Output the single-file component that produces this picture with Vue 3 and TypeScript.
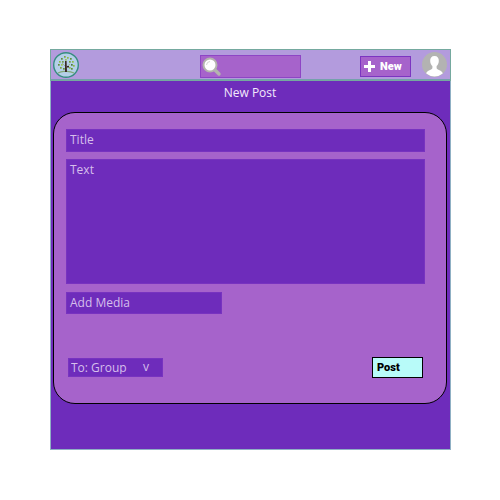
<script setup lang="ts">
import { ref } from 'vue'

const search = ref('')
const title = ref('')
const text = ref('')
const target = ref('group')

interface Leaf {
  x: number
  y: number
  tone: string
}

const leaves: Leaf[] = [
  { x: 11, y: 4, tone: '#7da63f' }, { x: 14, y: 5, tone: '#8bbd45' },
  { x: 17, y: 6, tone: '#5f8f3c' }, { x: 8, y: 6, tone: '#5f8f3c' },
  { x: 6, y: 9, tone: '#8bbd45' }, { x: 9, y: 9, tone: '#759b4b' },
  { x: 19, y: 9, tone: '#8bbd45' }, { x: 16, y: 9, tone: '#74a23c' },
  { x: 5, y: 12, tone: '#5f8f3c' }, { x: 8, y: 12, tone: '#9ac356' },
  { x: 18, y: 12, tone: '#50783c' }, { x: 20, y: 13, tone: '#8bbd45' },
  { x: 7, y: 15, tone: '#7da63f' }, { x: 10, y: 16, tone: '#5f8f3c' },
  { x: 16, y: 15, tone: '#8bbd45' }, { x: 18, y: 16, tone: '#5f8f3c' },
  { x: 12, y: 7, tone: '#9ac356' },
]
</script>

<template>
  <div class="page">
    <div class="frame">
      <header class="bar">
        <a class="logo" href="#" aria-label="Home">
          <svg viewBox="0 0 26 26" width="26" height="26" aria-hidden="true">
            <circle cx="13" cy="13" r="12.300" fill="#b4cfe8" stroke="#368d80" stroke-width="1.400" />
            <path d="M5 21Q9 19 12 19.500Q17 19 21 21" fill="none" stroke="#82a875" stroke-width="1.200" />
            <path d="M13 15L9 11M13.500 15L17 12" fill="none" stroke="#8a9a72" stroke-width=".6" />
            <path d="M12 20V9H13.600L14 20ZM14 14H16V15.500H14Z" fill="#3c2925" />
            <rect v-for="(leaf, i) in leaves" :key="i" :x="leaf.x" :y="leaf.y" width="1.700" height="1.700" :fill="leaf.tone" />
          </svg>
        </a>
        <label class="search">
          <svg viewBox="0 0 20 20" width="20" height="20" aria-hidden="true">
            <path d="M12 12L17 17" stroke="#b4b4ae" stroke-width="3.400" stroke-linecap="round" />
            <circle cx="8" cy="8" r="6.500" fill="#fff" stroke="#b4b4ae" stroke-width="2" />
            <path d="M4.500 8Q4.800 4.700 8 4.500" fill="none" stroke="#d5d5d2" />
          </svg>
          <input v-model="search" type="search" aria-label="Search" />
        </label>
        <div class="actions">
          <button class="new" type="button">
            <svg viewBox="0 0 11 11" width="11" height="11" aria-hidden="true">
              <path d="M5.500 0V11M0 5.500H11" stroke="#fff" stroke-width="3" />
            </svg>
            New
          </button>
          <a class="avatar" href="#" aria-label="Profile">
            <svg viewBox="0 0 25 25" width="25" height="25" aria-hidden="true">
              <circle cx="12.500" cy="12.500" r="12.500" fill="#b3b3b2" />
              <path d="M12.500 4C9.500 4 8 6 8.200 9C8.300 11.500 9.200 13 10.400 14V16C10.200 18 5 18 4.200 21.500Q8 24.500 12.500 24.500Q17 24.500 20.800 21.500C20 18 14.800 18 14.600 16V14C15.800 13 16.700 11.500 16.800 9C17 6 15.500 4 12.500 4Z" fill="#fff" />
            </svg>
          </a>
        </div>
      </header>

      <main class="content">
        <h1>New Post</h1>
        <form class="card" @submit.prevent>
          <input v-model="title" class="field title" type="text" placeholder="Title" aria-label="Title" />
          <textarea v-model="text" class="field body" placeholder="Text" aria-label="Text"></textarea>
          <button class="field media" type="button">Add Media</button>
          <div class="footer">
            <label class="group">
              <select v-model="target" aria-label="Post to">
                <option value="group">To: Group</option>
              </select>
              <span class="arrow" aria-hidden="true">v</span>
            </label>
            <button class="post" type="submit">Post</button>
          </div>
        </form>
      </main>
    </div>
  </div>
</template>

<style>
body {
  margin: 0;
  background: #fff;
}
</style>

<style scoped>
* {
  box-sizing: border-box;
}

.page {
  padding: 50px 49px 50px 50px;
  font-family: "Open Sans", sans-serif;
  font-size: 12px;
}

input,
textarea,
select,
button {
  margin: 0;
  border-radius: 0;
  outline: 0;
  font: inherit;
}

.frame {
  border: 1px solid #8fb0c4;
  border-top: 0;
  background: #6e2cbb;
}

.bar {
  display: grid;
  grid-template-columns: 1fr 101px 1fr;
  align-items: center;
  height: 30px;
  padding: 0 3px 0 2px;
  border-bottom: 1px solid #75a0ac;
  background: #b39bdd;
  box-shadow: 0 0 0 1px #75a99f;
}

.logo,
.avatar,
svg {
  display: block;
}

.logo {
  width: 26px;
}

.search {
  display: flex;
  align-items: center;
  height: 23px;
  margin-top: 4px;
  padding-left: 1px;
  border: 1px solid #8e45c5;
  background: #a663cb;
}

.search svg {
  flex: none;
}

.search input {
  width: 100%;
  min-width: 0;
  padding: 0;
  border: 0;
  background: transparent;
  color: #fff;
}

.actions {
  display: flex;
  justify-content: flex-end;
  align-items: center;
  gap: 11px;
}

.new {
  display: flex;
  align-items: center;
  gap: 5px;
  width: 51px;
  height: 21px;
  margin-top: 4px;
  padding: 0 3px;
  border: 1px solid #7c35c1;
  background: #a663cb;
  color: #fff;
}

.new,
.post {
  font-family: Roboto, sans-serif;
  font-size: 11px;
  font-weight: 900;
}

h1 {
  margin: 0;
  padding-top: 3px;
  color: #f3e9fb;
  font-size: 12px;
  font-weight: 400;
  line-height: 20px;
  text-align: center;
}

.content {
  padding: 0 3px 45px 2px;
}

.card {
  display: flex;
  flex-direction: column;
  align-items: flex-start;
  margin-top: 9px;
  padding: 16px 21px 25px 12px;
  border: 1px solid #000;
  border-radius: 22px;
  background: #a663cb;
}

.field {
  display: block;
  width: 100%;
  padding: 0 3px 2px;
  border: 1px solid #7833c0;
  background: #6e2cbb;
  color: #d6bfec;
  text-align: left;
}

.field::placeholder {
  color: #d6bfec;
  opacity: 1;
}

.title {
  height: 23px;
}

.body {
  height: 125px;
  margin-top: 7px;
  line-height: 20px;
  resize: none;
}

.media {
  width: 156px;
  height: 22px;
  margin-top: 8px;
}

.footer {
  display: flex;
  justify-content: space-between;
  align-items: center;
  width: 100%;
  margin-top: 43px;
  padding: 0 2px;
}

.group {
  display: grid;
  width: 95px;
  height: 19px;
  color: #d6bfec;
}

.group select,
.arrow {
  grid-area: 1 / 1;
}

.group select {
  appearance: none;
  width: 100%;
  height: 19px;
  padding: 0 2px 2px;
  border: 1px solid #7833c0;
  background: #6e2cbb;
  color: inherit;
}

.arrow {
  justify-self: end;
  padding-right: 14px;
  line-height: 18px;
  pointer-events: none;
}

.post {
  width: 51px;
  height: 21px;
  padding: 0 4px;
  border: 1px solid #000;
  background: #b8fbf9;
  color: #000;
  text-align: left;
}
</style>
